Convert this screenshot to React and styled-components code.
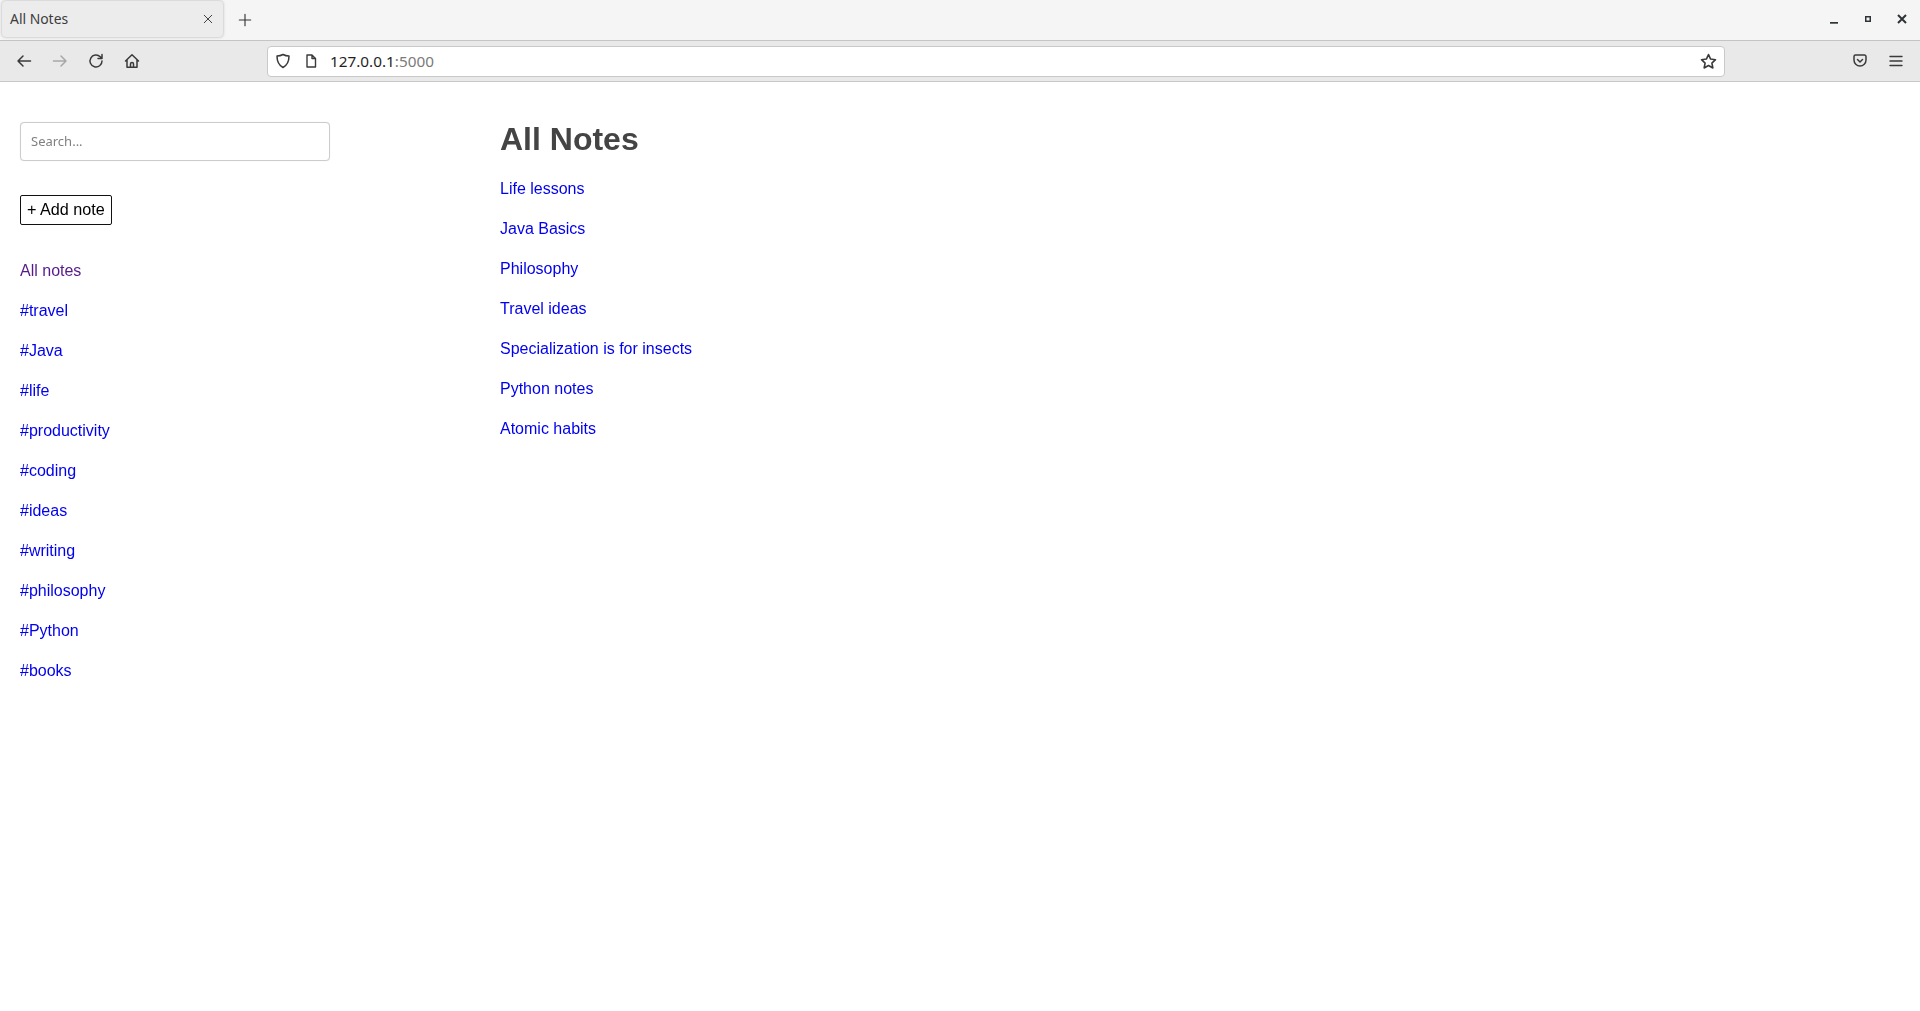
import React from "react";
import styled, { createGlobalStyle } from "styled-components";

const Global = createGlobalStyle`
  html, body { margin: 0; padding: 0; background: #fff; height: 100%; overflow: hidden; }
  #root { min-height: 100%; }
`;

const Page = styled.div`
  width: 1920px;
  height: 1011px;
  display: flex;
  flex-direction: column;
  background: #fff;
  overflow: hidden;
`;

const TitleBar = styled.header`
  height: 40px;
  flex: none;
  display: flex;
  align-items: flex-start;
  background: #f5f5f5;
  border-bottom: 1px solid #c4c4c4;
  font-family: "Noto Sans", sans-serif;
  padding-left: 2px;
`;

const Tab = styled.div`
  width: 221px;
  height: 36px;
  margin-top: 1px;
  box-sizing: border-box;
  display: flex;
  align-items: center;
  justify-content: space-between;
  padding: 0 9px 1px 8px;
  background: #ececec;
  border-radius: 4px;
  box-shadow: 0 0 3px rgba(0, 0, 0, 0.3);
  font-size: 13.9px;
  color: #3d3d3d;
`;

const NewTab = styled.div`
  width: 22px;
  height: 22px;
  margin: 9px 0 0 11px;
  display: flex;
  align-items: center;
  justify-content: center;
  color: #333;
`;

const WindowControls = styled.div`
  margin-left: auto;
  display: flex;
  align-items: center;
  height: 38px;
  gap: 19px;
  padding-right: 11px;
  color: #2e3436;
`;

const WinButton = styled.div`
  width: 15px;
  height: 15px;
  display: flex;
  align-items: center;
  justify-content: center;
`;

const Toolbar = styled.nav`
  height: 40px;
  flex: none;
  display: flex;
  align-items: center;
  background: #e9e9e9;
  border-bottom: 1px solid #c8c8c8;
  font-family: "Noto Sans", sans-serif;
  color: #3a3a3a;
`;

const NavGroup = styled.div`
  display: flex;
  align-items: center;
  gap: 16px;
  padding-left: 14px;
  width: 267px;
  box-sizing: border-box;
`;

const NavIcon = styled.div`
  width: 20px;
  height: 20px;
  display: flex;
  align-items: center;
  justify-content: center;
  color: ${(p) => (p.$dim ? "#a8a8a8" : "#3a3a3a")};
`;

const UrlBar = styled.div`
  width: 1458px;
  height: 31px;
  box-sizing: border-box;
  display: flex;
  align-items: center;
  background: #fff;
  border: 1px solid #c9c9c9;
  border-radius: 4px;
  padding: 0 7px 0 6px;
`;

const UrlIcon = styled.div`
  width: 18px;
  height: 18px;
  display: flex;
  align-items: center;
  justify-content: center;
  margin-right: 10px;
  color: #3a3a3a;
`;

const UrlText = styled.div`
  flex: 1;
  font-size: 15.3px;
  color: #1f1f1f;
  span { color: #7a7a7a; }
`;

const StarIcon = styled.div`
  width: 18px;
  height: 18px;
  color: #3a3a3a;
  display: flex;
  align-items: center;
  justify-content: center;
`;

const ToolbarRight = styled.div`
  display: flex;
  align-items: center;
  gap: 16px;
  margin-left: 125px;
`;

const Content = styled.div`
  flex: 1;
  display: flex;
  font-family: "Liberation Sans", Arial, sans-serif;
  font-size: 16px;
  will-change: transform;
`;

const Sidebar = styled.aside`
  width: 500px;
  flex: none;
  box-sizing: border-box;
  padding: 40px 20px 0;
`;

const SearchInput = styled.input`
  display: block;
  width: 310px;
  height: 39px;
  box-sizing: border-box;
  border: 1px solid #ccc;
  border-radius: 4px;
  padding: 0 10px 2px;
  font-family: "Noto Sans", sans-serif;
  font-size: 13px;
  background: #fff;
  outline: none;
  box-shadow: 0 0 1px rgba(0, 0, 0, 0.15);
  &::placeholder { color: #808080; opacity: 1; }
`;

const AddButton = styled.a`
  display: inline-block;
  margin-top: 34px;
  box-sizing: border-box;
  height: 30px;
  line-height: 27px;
  padding: 0 6px;
  border: 1.5px solid #111;
  border-radius: 2px;
  color: #000;
  text-decoration: none;
  font-size: 16.2px;
`;

const LinkList = styled.ul`
  list-style: none;
  margin: ${(p) => p.$top}px 0 0;
  padding: 0;
  display: flex;
  flex-direction: column;
  gap: 22px;
  line-height: 18px;
`;

const NoteLink = styled.a`
  color: ${(p) => (p.$visited ? "#551a8b" : "#0000ee")};
  text-decoration: none;
`;

const Main = styled.main`
  flex: 1;
  padding-top: 39px;
`;

const Title = styled.h1`
  margin: 0;
  font-size: 32px;
  line-height: 37px;
  font-weight: 700;
  color: #444;
`;

const tags = ["travel", "Java", "life", "productivity", "coding", "ideas", "writing", "philosophy", "Python", "books"];
const notes = ["Life lessons", "Java Basics", "Philosophy", "Travel ideas", "Specialization is for insects", "Python notes", "Atomic habits"];

const Stroke = ({ size = 16, w = 1.5, children }) => (
  <svg width={size} height={size} viewBox="0 0 16 16" fill="none" stroke="currentColor" strokeWidth={w} strokeLinecap="round" strokeLinejoin="round">
    {children}
  </svg>
);

export default function App() {
  return (
    <Page>
      <Global />
      <TitleBar>
        <Tab>
          <span>All Notes</span>
          <Stroke size={12} w={1.3}><path d="M3 3l10 10M13 3L3 13" /></Stroke>
        </Tab>
        <NewTab><Stroke size={14} w={1.3}><path d="M8 1.5v13M1.5 8h13" /></Stroke></NewTab>
        <WindowControls>
          <WinButton>
            <svg width="10" height="10" viewBox="0 0 10 10"><rect x="1" y="8" width="8" height="1.7" fill="currentColor" /></svg>
          </WinButton>
          <WinButton>
            <svg width="8" height="8" viewBox="0 0 8 8"><rect x="1.75" y="1.75" width="4.5" height="4.5" fill="none" stroke="currentColor" strokeWidth="1.5" /></svg>
          </WinButton>
          <WinButton>
            <svg width="10" height="10" viewBox="0 0 10 10"><path d="M1 1l8 8M9 1L1 9" stroke="currentColor" strokeWidth="2" /></svg>
          </WinButton>
        </WindowControls>
      </TitleBar>
      <Toolbar>
        <NavGroup>
          <NavIcon><Stroke><path d="M14.5 8H2M7 3L2 8l5 5" /></Stroke></NavIcon>
          <NavIcon $dim><Stroke><path d="M1.5 8H14M9 3l5 5-5 5" /></Stroke></NavIcon>
          <NavIcon><Stroke><path d="M14 8a6 6 0 1 1-1.8-4.3L14 5.5M14 1.5v4h-4" /></Stroke></NavIcon>
          <NavIcon><Stroke><path d="M1.5 8L8 1.8 14.5 8M3 7v7.2h10V7M6.5 14v-3a1.5 1.5 0 0 1 3 0v3" /></Stroke></NavIcon>
        </NavGroup>
        <UrlBar>
          <UrlIcon><Stroke><path d="M8 1.5c2 1.2 3.8 1.6 6 1.6 0 5.4-1.6 9.2-6 11.4C3.6 12.3 2 8.5 2 3.1c2.2 0 4-.4 6-1.6z" /></Stroke></UrlIcon>
          <UrlIcon><Stroke w={1.4}><path d="M4 2h5l3.5 3.5V14H4zM9 2v3.5h3.5" /></Stroke></UrlIcon>
          <UrlText>127.0.0.1<span>:5000</span></UrlText>
          <StarIcon><Stroke size={17}><path d="M8 1.5l2 4.2 4.6.6-3.4 3.2.9 4.6L8 11.8l-4.1 2.3.9-4.6L1.4 6.3 6 5.7z" /></Stroke></StarIcon>
        </UrlBar>
        <ToolbarRight>
          <NavIcon><Stroke><path d="M2 3.5A1.5 1.5 0 0 1 3.5 2h9A1.5 1.5 0 0 1 14 3.5V7a6 6 0 0 1-12 0zM5.5 6.5L8 9l2.5-2.5" /></Stroke></NavIcon>
          <NavIcon><Stroke w={1.4}><path d="M2 3.5h12M2 8h12M2 12.5h12" /></Stroke></NavIcon>
        </ToolbarRight>
      </Toolbar>
      <Content>
        <Sidebar>
          <SearchInput placeholder="Search..." />
          <AddButton href="#">+ Add note</AddButton>
          <LinkList $top={37}>
            <li><NoteLink href="#" $visited>All notes</NoteLink></li>
            {tags.map((t) => (
              <li key={t}><NoteLink href="#">#{t}</NoteLink></li>
            ))}
          </LinkList>
        </Sidebar>
        <Main>
          <Title>All Notes</Title>
          <LinkList $top={22}>
            {notes.map((n) => (
              <li key={n}><NoteLink href="#">{n}</NoteLink></li>
            ))}
          </LinkList>
        </Main>
      </Content>
    </Page>
  );
}
